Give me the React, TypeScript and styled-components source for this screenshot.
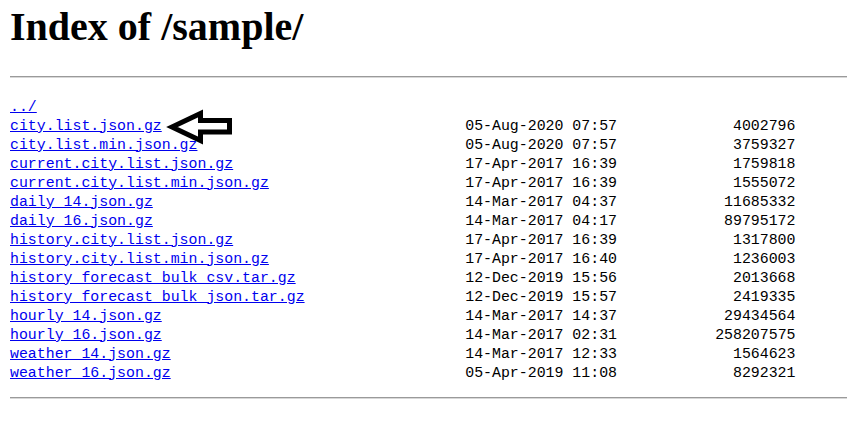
import React from "react";
import styled, { createGlobalStyle } from "styled-components";

const GlobalStyle = createGlobalStyle`
  html, body { margin: 0; padding: 0; background: #ffffff; }
  body { font-family: "Liberation Serif", "Times New Roman", serif; color: #000000; }
`;

const Page = styled.div`
  position: relative;
  display: flex;
  flex-direction: column;
  padding-left: 10px;
  width: 847px;
  box-sizing: border-box;
`;

const Heading = styled.h1`
  margin: 6.5px 0 0;
  font-family: "Liberation Serif", "Times New Roman", serif;
  font-weight: bold;
  font-size: 40px;
  line-height: 40px;
`;

const Rule = styled.hr<{ $top: number }>`
  margin: ${(p) => p.$top}px 0 0;
  height: 0;
  border: none;
  border-top: 1px solid #9a9a9a;
  border-bottom: 1px solid #d8d8d8;
`;

const Listing = styled.div`
  margin-top: 19.5px;
  display: flex;
  flex-direction: column;
  font-family: "Liberation Mono", "Courier New", monospace;
  font-size: 14.88px;
  line-height: 19px;
  white-space: pre;
`;

const Row = styled.div`
  display: grid;
  grid-template-columns: 51ch 17ch 20ch;
`;

const NameLink = styled.a`
  color: #0000ee;
  text-decoration: underline;
  justify-self: start;
`;

const DateCell = styled.span`
  color: #000000;
`;

const SizeCell = styled.span`
  color: #000000;
  text-align: right;
`;

const Arrow = styled.svg`
  position: absolute;
  left: 164px;
  top: 108px;
`;

const files: [string, string, string][] = [
  ["city.list.json.gz", "05-Aug-2020 07:57", "4002796"],
  ["city.list.min.json.gz", "05-Aug-2020 07:57", "3759327"],
  ["current.city.list.json.gz", "17-Apr-2017 16:39", "1759818"],
  ["current.city.list.min.json.gz", "17-Apr-2017 16:39", "1555072"],
  ["daily_14.json.gz", "14-Mar-2017 04:37", "11685332"],
  ["daily_16.json.gz", "14-Mar-2017 04:17", "89795172"],
  ["history.city.list.json.gz", "17-Apr-2017 16:39", "1317800"],
  ["history.city.list.min.json.gz", "17-Apr-2017 16:40", "1236003"],
  ["history_forecast_bulk_csv.tar.gz", "12-Dec-2019 15:56", "2013668"],
  ["history_forecast_bulk_json.tar.gz", "12-Dec-2019 15:57", "2419335"],
  ["hourly_14.json.gz", "14-Mar-2017 14:37", "29434564"],
  ["hourly_16.json.gz", "14-Mar-2017 02:31", "258207575"],
  ["weather_14.json.gz", "14-Mar-2017 12:33", "1564623"],
  ["weather_16.json.gz", "05-Apr-2019 11:08", "8292321"],
];

export default function App() {
  return (
    <>
      <GlobalStyle />
      <Page>
        <Heading>Index of /sample/</Heading>
        <Rule $top={29.5} />
        <Listing>
          <Row>
            <NameLink href="#">../</NameLink>
          </Row>
          {files.map(([name, date, size]) => (
            <Row key={name}>
              <NameLink href="#">{name}</NameLink>
              <DateCell>{date}</DateCell>
              <SizeCell>{size}</SizeCell>
            </Row>
          ))}
        </Listing>
        <Rule $top={14.5} />
        <Arrow width="72" height="38" viewBox="0 0 72 38">
          <polygon
            points="8,19 36.5,5.5 36.5,12.5 65.5,12.5 65.5,24 36.5,24 36.5,32.5"
            fill="#ffffff"
            stroke="#000000"
            strokeWidth="5"
            strokeLinejoin="miter"
            strokeMiterlimit="10"
          />
        </Arrow>
      </Page>
    </>
  );
}
